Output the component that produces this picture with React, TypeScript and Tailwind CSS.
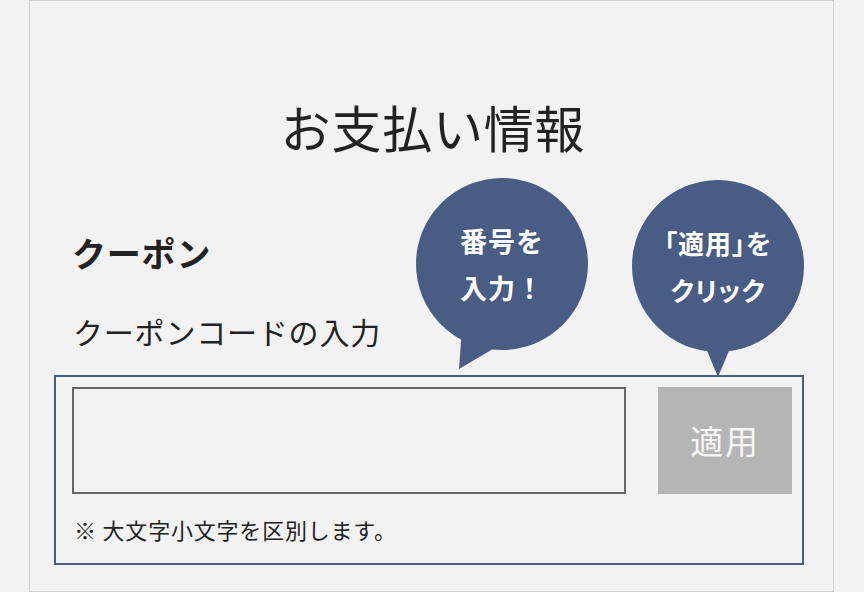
export default function App() {
  return (
    <div className="w-[864px] h-[592px] overflow-hidden bg-[#f2f2f2] font-['Noto_Sans_CJK_JP','Noto_Sans',sans-serif] text-[#222] tracking-[0.05em]">
      <div className="relative ml-[29px] w-[805px] h-[592px] border border-[#cfcfcf] bg-[#f2f2f2]">
        {/* Title */}
        <h1 className="pt-[90px] pl-[3px] text-center text-[50px] leading-[70px] font-normal">お支払い情報</h1>

        {/* Coupon heading */}
        <h2 className="mt-[67px] pl-[42px] text-[34px] leading-[50px] font-bold">クーポン</h2>
        <p className="mt-[31px] pl-[43px] text-[30px] leading-[44px]">クーポンコードの入力</p>

        {/* Coupon box */}
        <div className="mt-[22px] ml-[24px] w-[750px] h-[190px] border-2 border-[#485c84] pt-[10px] pl-[16px] pr-[10px]">
          <div className="flex gap-[32px]">
            <div className="w-[554px] h-[107px] border-2 border-[#666] bg-[#f2f2f2]" />
            <button className="w-[134px] h-[107px] bg-[#b5b5b5] text-[#f7f7f7] text-[33px] tracking-[0.05em] flex items-center justify-center">
              適用
            </button>
          </div>
          <p className="mt-[19px] pl-[2px] text-[22px] leading-[32px]">※ 大文字小文字を区別します。</p>
        </div>

        {/* Speech bubble: 番号を入力 */}
        <div className="absolute left-[386px] top-[177px] w-[172px] h-[192px]">
          <svg width="172" height="192" viewBox="0 0 172 192" className="absolute inset-0">
            <circle cx="86" cy="86" r="86" fill="#485c84" />
            <path d="M46 150 L43 191 L82 168 Z" fill="#485c84" />
          </svg>
          <div className="absolute left-0 top-0 w-[172px] h-[172px] flex flex-col items-center justify-center text-white font-bold text-[27px] leading-[47px] tracking-[1px]">
            <span>番号を</span>
            <span>入力！</span>
          </div>
        </div>

        {/* Speech bubble: 「適用」をクリック */}
        <div className="absolute left-[602px] top-[179px] w-[172px] h-[198px]">
          <svg width="172" height="198" viewBox="0 0 172 198" className="absolute inset-0">
            <circle cx="86" cy="86" r="86" fill="#485c84" />
            <path d="M73 166 L86 197 L99 166 Z" fill="#485c84" />
          </svg>
          <div className="absolute left-0 top-0 w-[172px] h-[172px] flex flex-col items-center justify-center text-white font-bold text-[26px] leading-[47px] tracking-[1px] [font-feature-settings:'palt']">
            <span>「適用」を</span>
            <span>クリック</span>
          </div>
        </div>
      </div>
    </div>
  );
}
